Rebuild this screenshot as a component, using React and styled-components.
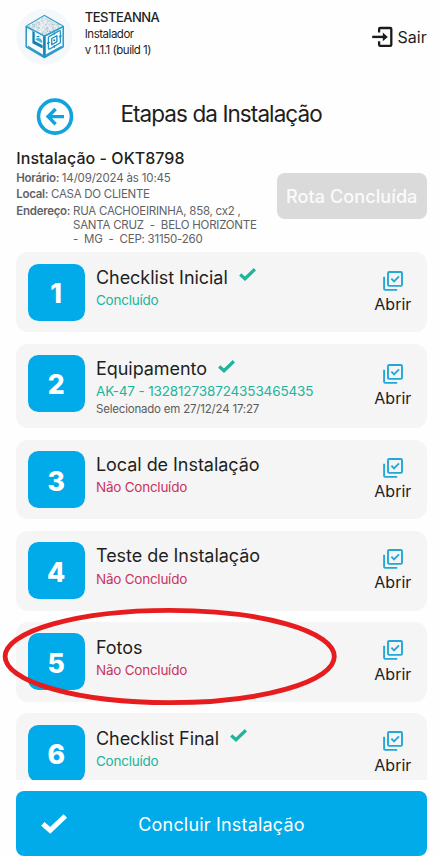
import React from 'react';
import styled, { createGlobalStyle } from 'styled-components';

const GlobalStyle = createGlobalStyle`
  * { box-sizing: border-box; }
  body { margin: 0; background: #fff; }
`;

const Screen = styled.div`
  position: relative;
  display: flex;
  flex-direction: column;
  width: 440px;
  height: 858px;
  padding: 0 13.3px 2px 16.3px;
  overflow: hidden;
  background: #fefefe;
  color: #1f1f21;
  font-family: Inter, 'Liberation Sans', sans-serif;
  white-space: nowrap;
`;

const Header = styled.header`
  display: flex;
  align-items: flex-start;
  height: 97px;
  padding-top: 8px;
`;

const Profile = styled.div`
  flex: 1;
  padding: 0.6px 0 0 11.4px;
`;

const UserName = styled.div`
  font-size: 13px;
  font-weight: 450;
  line-height: 17px;
  letter-spacing: -0.5px;
`;

const UserMeta = styled.div`
  font-size: 11.5px;
  line-height: 16.4px;
  letter-spacing: -0.47px;
`;

const ExitButton = styled.button`
  display: flex;
  align-items: center;
  gap: 5px;
  margin-top: 18px;
  padding: 0;
  border: 0;
  background: none;
  color: inherit;
  font: 400 16px/22px Inter, sans-serif;
`;

const TitleBar = styled.div`
  display: flex;
  align-items: center;
  gap: 46.4px;
  height: 40px;
  padding-left: 19.7px;
`;

const PageTitle = styled.h1`
  margin: -5px 0 0;
  font-size: 22.5px;
  font-weight: 400;
  line-height: 28px;
  letter-spacing: -0.92px;
`;

const Summary = styled.section`
  display: flex;
  justify-content: space-between;
  height: 115.5px;
  padding-top: 11px;
`;

const SummaryTitle = styled.h2`
  margin: 0 0 0.5px;
  font-size: 16px;
  font-weight: 450;
  line-height: 20px;
  letter-spacing: 0.05px;
`;

const Detail = styled.div`
  display: flex;
  gap: 2.8px;
  padding-top: 2.4px;
  color: #626265;
  font-size: 11.5px;
  line-height: 14.1px;
`;

const DetailLabel = styled.span`
  font-weight: 600;
  letter-spacing: -0.28px;
`;

const DetailValue = styled.span`
  letter-spacing: ${(p) => p.$tracking}px;
  white-space: pre;
`;

const RouteButton = styled.button`
  width: 150px;
  height: 46.6px;
  margin-top: 24.8px;
  padding: 1px 0 0;
  border: 0;
  border-radius: 8px;
  background: #dadada;
  color: #fafafa;
  font: 500 18px/22px Inter, sans-serif;
  letter-spacing: 0.1px;
`;

const StepList = styled.main`
  display: flex;
  flex-direction: column;
  gap: 11.6px;
  height: 527.5px;
  overflow: hidden;
`;

const StepCard = styled.article`
  display: flex;
  flex: none;
  height: ${(p) => (p.$tall ? 84.5 : 79.6)}px;
  padding: 11.3px 15.4px 0 11.4px;
  border-radius: 12px;
  background: #f5f5f5;
`;

const StepNumber = styled.div`
  display: flex;
  align-items: center;
  justify-content: center;
  width: 57px;
  height: 57px;
  padding-top: 2px;
  border-radius: 10.5px;
  background: #01abe9;
  color: #fff;
  font-size: 26.5px;
  font-weight: 800;
  line-height: 32px;
`;

const StepBody = styled.div`
  flex: 1;
  padding: 3.2px 0 0 11.3px;
`;

const StepTitle = styled.h3`
  display: flex;
  align-items: center;
  gap: 11px;
  margin: 0 0 2.2px;
  font-size: 18px;
  font-weight: 400;
  line-height: 22px;
  letter-spacing: -0.05px;

  svg { margin-top: -6px; }
`;

const StepStatus = styled.div`
  color: ${(p) => (p.$done ? '#20b49b' : '#c93461')};
  font-size: 13.5px;
  line-height: 18px;
  letter-spacing: ${(p) => p.$tracking}px;
`;

const StepNote = styled.div`
  margin-top: 1px;
  color: #5c5c5f;
  font-size: 11.5px;
  line-height: 16px;
  letter-spacing: -0.2px;
`;

const OpenButton = styled.button`
  display: flex;
  flex-direction: column;
  align-items: center;
  justify-content: center;
  gap: 3.3px;
  margin-top: -11.3px;
  padding: 0;
  border: 0;
  background: none;
  color: #1f1f21;
  font: 400 16px/20px Inter, sans-serif;
`;

const FinishButton = styled.button`
  display: flex;
  flex: none;
  align-items: center;
  width: 100%;
  height: 64.6px;
  margin-top: 11.5px;
  padding: 2.6px 0 0 24.3px;
  border: 0;
  border-radius: 8px;
  background: #01abe9;
  color: #fff;
  font: 400 18px/22px Inter, sans-serif;
  letter-spacing: 0.18px;

  svg { margin: -2px 71.7px 0 0; }
`;

const Highlight = styled.svg`
  position: absolute;
  left: 0;
  top: 600px;
  pointer-events: none;
`;

function CubeLogo() {
  const specks = [];
  for (let row = 0; row < 11; row += 1) {
    const half = 17 - Math.abs(row - 5) * 3.2;
    for (let x = -half; x <= half; x += 1.7) {
      const n = Math.abs(Math.round(Math.sin(row * 37 + x * 19) * 100));
      specks.push({ x: 28.4 + x + (n % 3) * 0.3, y: 9.4 + row * 1.75, c: ['#c3d5dc', '#ffffff', '#a3b8c2', '#e3ebee'][n % 4] });
    }
  }
  return (
    <svg width="57" height="57" viewBox="0 0 57 57" fill="none" strokeLinejoin="round">
      <circle cx="28.4" cy="28.7" r="28" fill="#f5f8fa" />
      <path d="M28.4 7.6 47.2 18.3V38.8L28.4 49.5 10.2 38.8V18.3Z" fill="#f7fcfe" stroke="#2798c6" strokeWidth="1.5" />
      <path d="M28.4 8 46.2 18.3 28.4 28 10.8 18.3Z" fill="#dde6ea" />
      {specks.map((s, i) => <circle key={i} cx={s.x} cy={s.y} r=".6" fill={s.c} />)}
      <path d="M10.5 18.7 28.4 28.3 46.8 18.7" stroke="#249dca" strokeWidth="1.6" />
      <path d="M28.4 28.5V49" stroke="#1280b3" strokeWidth="2.6" />
      <path d="M11.8 38.4 28.2 48.2 45.8 38.3" stroke="#2798c6" strokeWidth="1.4" />
      <path d="M16.3 22.6 26.6 28V40.3L16.3 35Z" fill="#e6f5fb" />
      <path d="M16.4 22.8V35.2L26.6 40.6V37.2L18.7 33V24.2Z" fill="#1280b3" />
      <path d="m19.4 31.4 6.8 3.5v-2.2q-3.6-5-6.8-1.3Z" fill="#4aafd4" />
      <path d="M20.6 28.6h2.8" stroke="#1687b8" strokeWidth="1" />
      <path d="M33 28.6 43 22.9Q44.4 22.3 44.4 23.8V34.8L34 40.9Q32.4 41.6 32.4 40.1V29.6Z" stroke="#2798c6" strokeWidth="1.3" />
      <path d="m35.7 30.6 5.2-2.9v6.1l-5.2 3Z" stroke="#1687b8" strokeWidth="1.2" />
      <path d="M38.3 24.4v2.2M38.3 37.2v2.6M31 35.6l2.7-1.3M43 29l2.7-1.3" stroke="#1687b8" strokeWidth="1.2" />
      <circle cx="38.3" cy="32.3" r="1" fill="#1687b8" />
    </svg>
  );
}

function ExitIcon() {
  return (
    <svg width="21" height="22" viewBox="0 0 21 22" fill="none" stroke="#1b1b1d" strokeWidth="2.3">
      <path d="M7.1 6.6V3.1Q7.1 2 8.2 2H18.2Q19.3 2 19.3 3.1V18.7Q19.3 19.8 18.2 19.8H8.2Q7.1 19.8 7.1 18.7V15.2" />
      <path d="M.2 10.9H12" strokeWidth="2.4" />
      <path d="m10.8 6.5 5 4.4-5 4.4Z" fill="#1b1b1d" stroke="none" />
    </svg>
  );
}

function BackIcon() {
  return (
    <svg width="38" height="38" viewBox="0 0 38 38" fill="none" stroke="#10a3dc">
      <circle cx="19" cy="18.6" r="16.5" strokeWidth="3.6" />
      <path d="M28 18.6H13M19.6 11 12.1 18.6 19.6 26.2" strokeWidth="3.4" />
    </svg>
  );
}

function CheckIcon({ width, color }) {
  return (
    <svg width={width} height={(width * 13) / 17} viewBox="0 0 17 13" fill="none" stroke={color} strokeWidth="3.3">
      <path d="M1.2 6.4 6 10.7 15.9 1.3" />
    </svg>
  );
}

function ChecklistIcon() {
  return (
    <svg width="20" height="20" viewBox="0 0 20 20" fill="none" stroke="#22a7d6" strokeWidth="1.9">
      <rect x="5" y="1" width="14" height="13.9" rx="1.2" />
      <path d="M1.1 5.7V17.8Q1.1 18.9 2.2 18.9H14.2" />
      <path d="M8.4 7.7 11 10.3 16 5.3" />
    </svg>
  );
}

const steps = [
  { title: 'Checklist Inicial', done: true, check: true },
  { title: 'Equipamento', done: true, check: true, status: 'AK-47 - 132812738724353465435', note: 'Selecionado em 27/12/24 17:27' },
  { title: 'Local de Instalação' },
  { title: 'Teste de Instalação' },
  { title: 'Fotos' },
  { title: 'Checklist Final', done: true, check: true },
];

function Step({ number, title, done, check, status, note }) {
  return (
    <StepCard $tall={Boolean(note)}>
      <StepNumber>{number}</StepNumber>
      <StepBody>
        <StepTitle>
          {title}
          {check && <CheckIcon width={17} color="#20b49b" />}
        </StepTitle>
        <StepStatus $done={done} $tracking={status ? -0.14 : -0.24}>
          {status || (done ? 'Concluído' : 'Não Concluído')}
        </StepStatus>
        {note && <StepNote>{note}</StepNote>}
      </StepBody>
      <OpenButton>
        <ChecklistIcon />
        Abrir
      </OpenButton>
    </StepCard>
  );
}

export default function App() {
  return (
    <Screen>
      <GlobalStyle />
      <Header>
        <CubeLogo />
        <Profile>
          <UserName>TESTEANNA</UserName>
          <UserMeta>Instalador</UserMeta>
          <UserMeta>v 1.1.1 (build 1)</UserMeta>
        </Profile>
        <ExitButton><ExitIcon />Sair</ExitButton>
      </Header>
      <TitleBar>
        <BackIcon />
        <PageTitle>Etapas da Instalação</PageTitle>
      </TitleBar>
      <Summary>
        <div>
          <SummaryTitle>Instalação - OKT8798</SummaryTitle>
          <Detail><DetailLabel>Horário:</DetailLabel><DetailValue $tracking={-0.17}>14/09/2024 às 10:45</DetailValue></Detail>
          <Detail><DetailLabel>Local:</DetailLabel><DetailValue $tracking={-0.28}>CASA DO CLIENTE</DetailValue></Detail>
          <Detail>
            <DetailLabel>Endereço:</DetailLabel>
            <DetailValue $tracking={-0.24}>{'RUA CACHOEIRINHA, 858, cx2 ,\nSANTA CRUZ  -  BELO HORIZONTE\n-  MG  -  CEP: 31150-260'}</DetailValue>
          </Detail>
        </div>
        <RouteButton>Rota Concluída</RouteButton>
      </Summary>
      <StepList>
        {steps.map((step, i) => <Step key={step.title} number={i + 1} {...step} />)}
      </StepList>
      <FinishButton>
        <CheckIcon width={26} color="#fff" />
        Concluir Instalação
      </FinishButton>
      <Highlight width="440" height="120" viewBox="0 0 440 120" fill="none">
        <ellipse cx="169.7" cy="56.5" rx="164.6" ry="46.2" stroke="#e61c1e" strokeWidth="4.8" />
      </Highlight>
    </Screen>
  );
}
